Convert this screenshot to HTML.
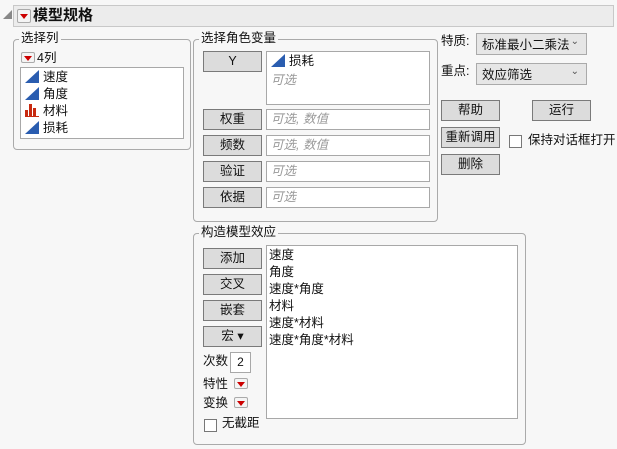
<!DOCTYPE html>
<html><head><meta charset="utf-8"><style>
body{margin:0;width:617px;height:449px;background:#f7f7f7;font-family:"Liberation Sans","Noto Sans CJK SC",sans-serif;font-size:12px;color:#111;position:relative;overflow:hidden}
.a{position:absolute}
.grp{position:absolute;border:1px solid #aaa;border-radius:4px}
.lbl{position:absolute;background:#f7f7f7;padding:0 2px;font-size:12.5px;line-height:15px}
.btn{position:absolute;width:57px;height:19px;background:#dcdcdc;border:1px solid #7a7a7a;text-align:center;line-height:19px;font-size:12.5px}
.box{position:absolute;background:#fff;border:1px solid #a8a8a8}
.ph{color:#999;font-style:italic}
.dd{position:absolute;width:16px;height:12px;border:1px solid #aaa;border-radius:2px;background:#f4f4f4}
.dd:after{content:"";position:absolute;left:50%;top:50%;margin-left:-4px;margin-top:-2px;border-left:4px solid transparent;border-right:4px solid transparent;border-top:5px solid #c00}
.tri{display:inline-block;width:0;height:0;border-left:14px solid transparent;border-bottom:13px solid #2a5db0;vertical-align:-2px;margin-right:4px}
.chk{position:absolute;width:11px;height:11px;border:1px solid #777;background:#fff}
.sel{position:absolute;width:111px;height:22px;border:1px solid #aaa;background:#e6e6e6;font-size:12.5px;line-height:22px;padding-left:5px;box-sizing:border-box}
.sel:after{content:"⌄";position:absolute;right:7px;top:-3px;font-size:10px;color:#555}
.it{position:absolute;line-height:17px;font-size:12.5px}
</style></head><body>
<div class="a" style="left:3px;top:10px;width:0;height:0;border-left:9px solid transparent;border-bottom:9px solid #888"></div>
<div class="a" style="left:13px;top:5px;width:599px;height:20px;background:#ececec;border:1px solid #c8c8c8"></div>
<div class="dd" style="left:17px;top:9px;width:12px;height:12px"></div>
<div class="a" style="left:33px;top:6px;font-size:15px;font-weight:bold;line-height:20px">模型规格</div>

<div class="grp" style="left:13px;top:39px;width:176px;height:109px"></div>
<div class="lbl" style="left:19px;top:31px">选择列</div>
<div class="dd" style="left:21px;top:52px;width:12px;height:9px"></div>
<div class="a" style="left:37px;top:51px;font-size:12.5px;line-height:15px">4列</div>
<div class="box" style="left:20px;top:67px;width:162px;height:70px"></div>
<div class="it" style="left:25px;top:69px"><span class="tri"></span>速度</div>
<div class="it" style="left:25px;top:86px"><span class="tri"></span>角度</div>
<div class="it" style="left:25px;top:103px"><span style="display:inline-block;width:14px;height:13px;vertical-align:-2px;margin-right:4px;position:relative"><i style="position:absolute;left:0;bottom:0;width:3px;height:7px;background:#c82a10"></i><i style="position:absolute;left:4px;bottom:0;width:3px;height:13px;background:#c82a10"></i><i style="position:absolute;left:8px;bottom:0;width:3px;height:9px;background:#c82a10"></i><i style="position:absolute;left:0;bottom:0;width:14px;height:1px;background:#c82a10"></i></span>材料</div>
<div class="it" style="left:25px;top:120px"><span class="tri"></span>损耗</div>

<div class="grp" style="left:193px;top:39px;width:243px;height:181px"></div>
<div class="lbl" style="left:199px;top:31px">选择角色变量</div>
<div class="btn" style="left:203px;top:51px">Y</div>
<div class="box" style="left:266px;top:51px;width:162px;height:52px"></div>
<div class="it" style="left:271px;top:53px"><span class="tri"></span>损耗</div>
<div class="it ph" style="left:271px;top:72px">可选</div>
<div class="btn" style="left:203px;top:109px">权重</div>
<div class="box" style="left:266px;top:109px;width:162px;height:19px"></div><div class="it ph" style="left:271px;top:111px">可选, 数值</div>
<div class="btn" style="left:203px;top:135px">频数</div>
<div class="box" style="left:266px;top:135px;width:162px;height:19px"></div><div class="it ph" style="left:271px;top:137px">可选, 数值</div>
<div class="btn" style="left:203px;top:161px">验证</div>
<div class="box" style="left:266px;top:161px;width:162px;height:19px"></div><div class="it ph" style="left:271px;top:163px">可选</div>
<div class="btn" style="left:203px;top:187px">依据</div>
<div class="box" style="left:266px;top:187px;width:162px;height:19px"></div><div class="it ph" style="left:271px;top:189px">可选</div>

<div class="it" style="left:441px;top:33px">特质:</div>
<div class="sel" style="left:476px;top:33px">标准最小二乘法</div>
<div class="it" style="left:441px;top:63px">重点:</div>
<div class="sel" style="left:476px;top:63px">效应筛选</div>
<div class="btn" style="left:441px;top:100px">帮助</div>
<div class="btn" style="left:532px;top:100px">运行</div>
<div class="btn" style="left:441px;top:127px">重新调用</div>
<div class="chk" style="left:509px;top:135px"></div>
<div class="it" style="left:528px;top:132px">保持对话框打开</div>
<div class="btn" style="left:441px;top:154px">删除</div>

<div class="grp" style="left:193px;top:233px;width:331px;height:210px"></div>
<div class="lbl" style="left:199px;top:225px">构造模型效应</div>
<div class="btn" style="left:203px;top:248px">添加</div>
<div class="btn" style="left:203px;top:274px">交叉</div>
<div class="btn" style="left:203px;top:300px">嵌套</div>
<div class="btn" style="left:203px;top:326px">宏 ▾</div>
<div class="it" style="left:203px;top:353px">次数</div>
<div class="box" style="left:230px;top:352px;width:19px;height:19px;text-align:center;line-height:19px">2</div>
<div class="it" style="left:203px;top:376px">特性</div><div class="dd" style="left:234px;top:378px;width:12px;height:9px"></div>
<div class="it" style="left:203px;top:395px">变换</div><div class="dd" style="left:234px;top:397px;width:12px;height:9px"></div>
<div class="chk" style="left:204px;top:419px"></div>
<div class="it" style="left:222px;top:415px">无截距</div>
<div class="box" style="left:266px;top:245px;width:250px;height:172px"></div>
<div class="it" style="left:269px;top:247px">速度</div>
<div class="it" style="left:269px;top:264px">角度</div>
<div class="it" style="left:269px;top:281px">速度*角度</div>
<div class="it" style="left:269px;top:298px">材料</div>
<div class="it" style="left:269px;top:315px">速度*材料</div>
<div class="it" style="left:269px;top:332px">速度*角度*材料</div>
</body></html>
